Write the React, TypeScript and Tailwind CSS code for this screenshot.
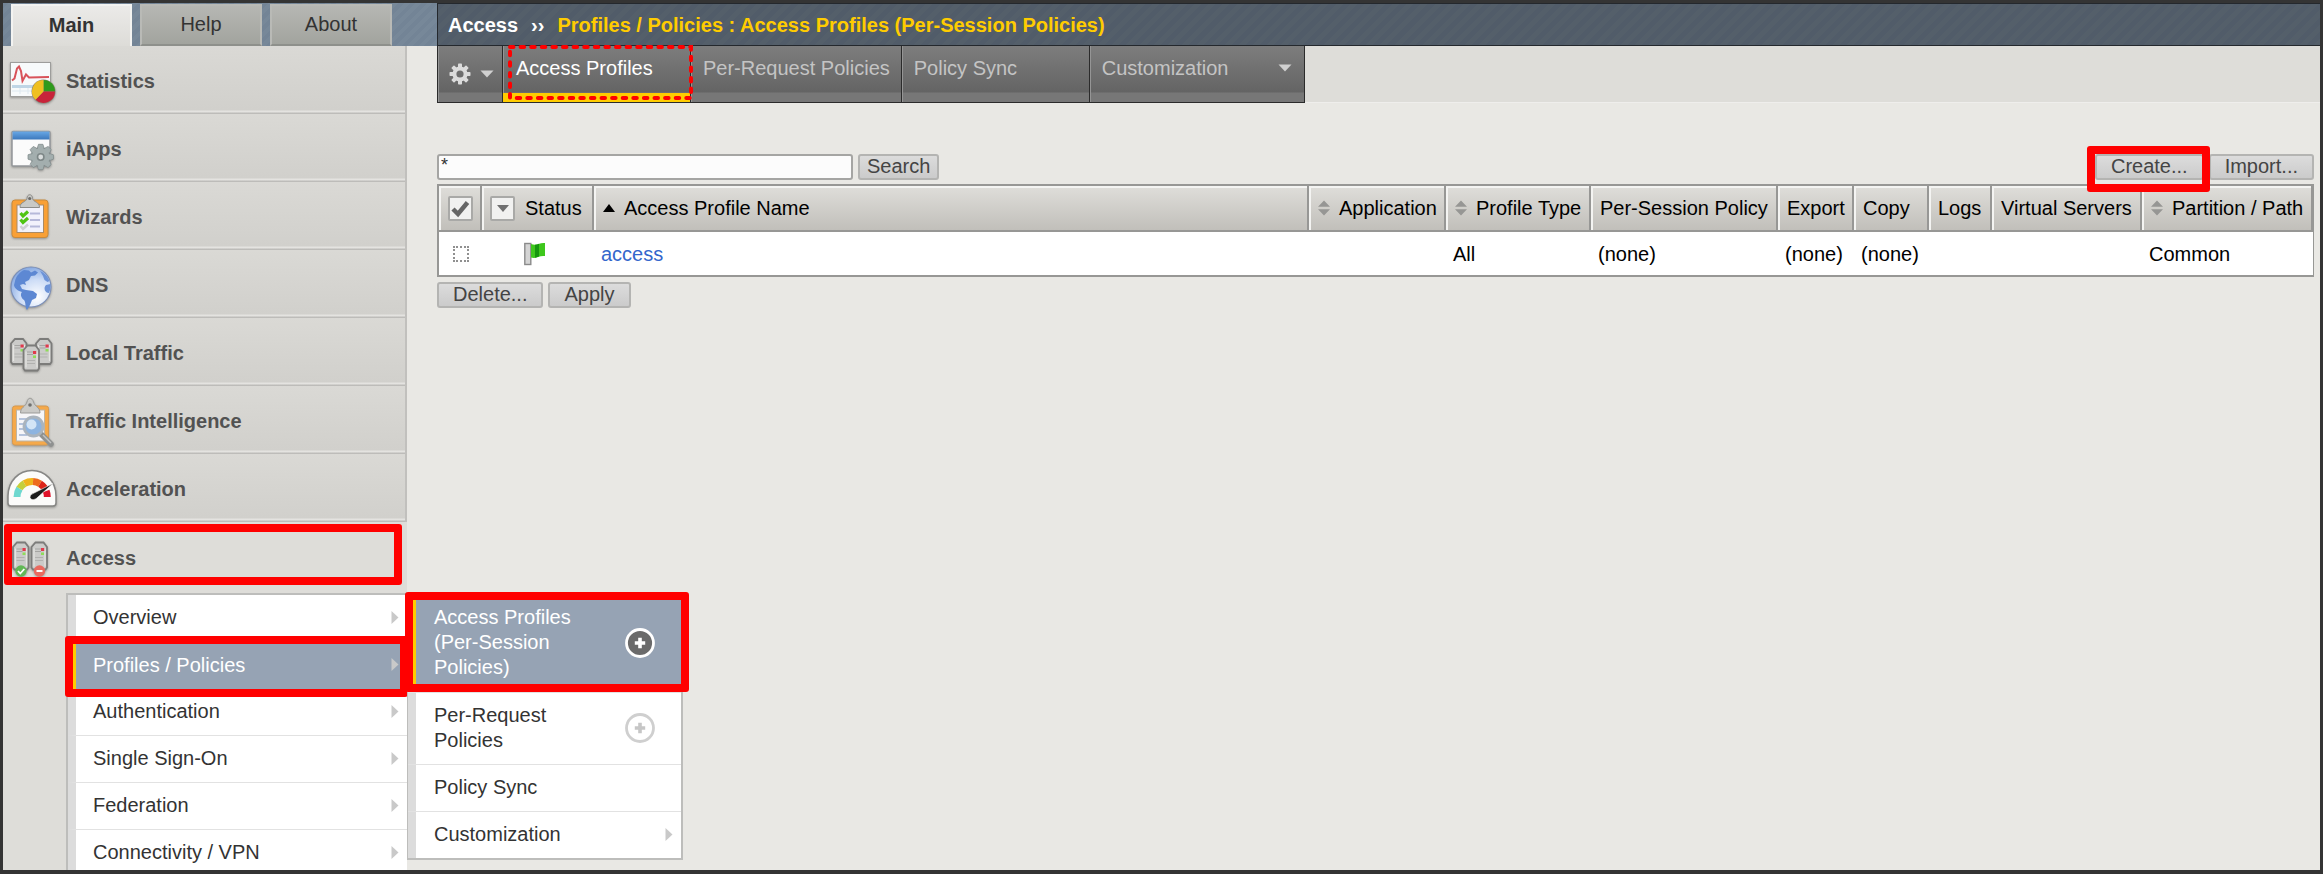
import React from "react";

type IconProps = { children: React.ReactNode };

function MenuIcon({ children }: IconProps) {
  return (
    <svg aria-hidden="true" className="h-[68px] w-[63px] shrink-0 drop-shadow-[0_1px_1px_rgba(0,0,0,0.3)]" viewBox="3 0 63 68">
      {children}
    </svg>
  );
}

const TEETH = [0, 45, 90, 135, 180, 225, 270, 315];

function StatisticsIcon() {
  return (
    <MenuIcon>
      <rect x="10.5" y="15.5" width="40" height="34" fill="#f7fafb" stroke="#9d9d9b" />
      <rect x="12" y="38" width="26" height="3" fill="#bfd6e6" />
      <path d="M12 44h20M20 41v6M28 41v6" stroke="#dde8ef" />
      <path d="M12 33.500L14.500 31.500L17 21.500L19 19.500L21 24L22.500 34L26 27.500L29 30.500L49 30" fill="none" stroke="#d8535a" strokeWidth="2" />
      <circle cx="43.500" cy="44.500" r="12" fill="#8f8878" />
      <path d="M43.500 44.500V33a11.500 11.500 0 0 1 11.500 11.500z" fill="#2f9a1c" />
      <path d="M43.500 44.500H55a11.500 11.500 0 0 1-19.500 8.200z" fill="#c8233a" />
      <path d="M43.500 44.500L35.500 52.700A11.500 11.500 0 0 1 43.500 33z" fill="#efc021" />
    </MenuIcon>
  );
}

function AppsIcon() {
  return (
    <MenuIcon>
      <defs>
        <linearGradient id="appsBar" x1="0" y1="0" x2="0" y2="1">
          <stop offset="0" stopColor="#69a8e6" />
          <stop offset="1" stopColor="#3c78bc" />
        </linearGradient>
      </defs>
      <rect x="12" y="16.500" width="38" height="34.500" rx="1" fill="#fbfbfb" stroke="#94979a" strokeWidth="1.500" />
      <rect x="12.500" y="16.500" width="37" height="8" fill="url(#appsBar)" />
      <g fill="#a3aeae" stroke="#7d8787" strokeWidth="0.700">
        {TEETH.map((a) => (
          <path key={a} d="M37 34L38.500 29.300H42.900L44.400 34z" transform={`rotate(${a} 40.700 42)`} />
        ))}
        <circle cx="40.700" cy="42" r="9.300" />
      </g>
      {TEETH.map((a) => (
        <path key={a} d="M37.500 35L39 30.200H42.400L43.900 35z" fill="#a3aeae" transform={`rotate(${a} 40.700 42)`} />
      ))}
      <circle cx="40.700" cy="42" r="3.200" fill="#d9dddd" stroke="#7d8787" strokeWidth="1.600" />
    </MenuIcon>
  );
}

function WizardsIcon() {
  return (
    <MenuIcon>
      <rect x="12" y="17" width="36" height="37.500" rx="3" fill="#f9a036" stroke="#c98a3b" />
      <rect x="17" y="22" width="26.500" height="27.500" fill="#f2f2fc" stroke="#a98a66" />
      <path d="M20 24.500c0-6 6-5 7-9 0-5 5.500-5 5.500 0 1 4 7 3 7 9z" fill="#c9c9c6" stroke="#8d8d8a" />
      <circle cx="29.700" cy="15.500" r="1.600" fill="#6a6a68" />
      <path d="M20.500 30l2.500 3 5-4.500M20.500 36.500l2.500 3 5-4.500" fill="none" stroke="#4fc414" strokeWidth="3.200" />
      <path d="M20.500 43l2.500 3 5-4.500" fill="none" stroke="#cfcfd4" strokeWidth="2.500" />
      <path d="M30 30.500h10M30 37h10M30 43.500h10" stroke="#b6b9da" strokeWidth="2.200" />
    </MenuIcon>
  );
}

function DnsIcon() {
  return (
    <MenuIcon>
      <defs>
        <radialGradient id="dnsGlobe" cx="0.65" cy="0.75" r="0.8">
          <stop offset="0" stopColor="#ffffff" />
          <stop offset="0.550" stopColor="#ccdcf6" />
          <stop offset="1" stopColor="#7fa4e0" />
        </radialGradient>
      </defs>
      <circle cx="31" cy="36" r="20" fill="url(#dnsGlobe)" stroke="#7b8fb8" strokeWidth="1.200" />
      <path
        d="M15 30c1-5 5-9 9-11l5 .5 2 2 4-2 3 2-3 3-4 .5-2 4-4 2 1 3-3-1-3 1 2 4 4 1 7 1 4 3-1 4-4 2-2 5-3 5c-2-2-1-8-3-10-3-2-4-6-2-8-4-1-8-4-8-7z"
        fill="#5d88d3"
      />
      <path d="M40 20c5 2 8 6 9.500 10l-2 1-3-2-1.500-4zM46 34l4.500-1c.3 4-.5 7-1.500 9-4 0-6-5-3-8z" fill="#6c93d8" />
    </MenuIcon>
  );
}

function Server({ x, y, h }: { x: number; y: number; h: number }) {
  return (
    <g transform={`translate(${x} ${y})`}>
      <path d={`M1 5.500L5 1H13L16.500 5.500V${h - 2}L15 ${h}H2.500L1 ${h - 2}z`} fill="#cbcbc9" stroke="#7c7c7a" strokeWidth="1.800" />
      <path d={`M3.500 7V${h - 3}M14.500 7V${h - 3}`} stroke="#e4e4e2" strokeWidth="1.200" />
      <path d="M4.500 7.500h6M4.500 10h6" stroke="#a5a5a3" strokeWidth="1.200" />
      <path d="M4.500 16h8M4.500 19h8" stroke="#b1b1af" strokeWidth="1" />
      <rect x="10.500" y="6.500" width="3.200" height="3" fill="#e03a4c" />
      <rect x="10.500" y="11" width="3" height="2.500" fill="#8fdc5a" />
    </g>
  );
}

function LocalTrafficIcon() {
  return (
    <MenuIcon>
      <Server x={10} y={19} h={26} />
      <Server x={35} y={19} h={26} />
      <Server x={22.5} y={25.5} h={26} />
    </MenuIcon>
  );
}

function IntelligenceIcon() {
  return (
    <MenuIcon>
      <rect x="12.500" y="19" width="36" height="39" rx="2.500" fill="#f5a94a" stroke="#d69a50" />
      <rect x="16.500" y="23" width="28" height="31" fill="#f6f6f8" stroke="#bdb4a4" />
      <path d="M19 32h9M19 37h5M19 42h5M19 48h8" stroke="#b4c3dc" strokeWidth="1.800" />
      <path d="M20.500 26c0-6 5-6 6.500-11 1-5 5-5 6.500 0 1.500 5 6.500 5 6.500 11z" fill="#cacac7" stroke="#9b9b98" />
      <circle cx="30" cy="18" r="1.800" fill="#70706e" />
      <path d="M41 47l10 10" stroke="#8f9190" strokeWidth="5.500" strokeLinecap="round" />
      <path d="M43 48l8 8" stroke="#c1c3c2" strokeWidth="1.500" />
      <circle cx="33.500" cy="39.500" r="9.500" fill="#8db4e0" stroke="#aab4bd" strokeWidth="2.800" />
      <circle cx="31.500" cy="37.500" r="5" fill="#d3e5f6" />
    </MenuIcon>
  );
}

function AccelerationIcon() {
  return (
    <MenuIcon>
      <path d="M8 48V41C8 26 19 15.500 32 15.500S56 26 56 41V48Q56 51 53 51H11Q8 51 8 48z" fill="#fbfbfa" stroke="#868684" strokeWidth="1.500" />
      <g fill="none" strokeWidth="7">
        <path d="M17 42A15.500 15.500 0 0 1 19.500 33.500" stroke="#6ed8cf" />
        <path d="M19.500 33.500A15.500 15.500 0 0 1 24.500 28.500" stroke="#c5cf3c" />
        <path d="M24.500 28.500A15.500 15.500 0 0 1 33 26.500" stroke="#eeb41c" />
        <path d="M33 26.500A15.500 15.500 0 0 1 40 28.700" stroke="#ed6a1c" />
        <path d="M40 28.700A15.500 15.500 0 0 1 45 33.500" stroke="#dc2418" />
        <path d="M46.200 36A15.500 15.500 0 0 1 47.300 42" stroke="#e0122a" />
      </g>
      <path d="M53 28.500L36 43.800Q31 46 30 42.500Q29.500 39.500 34 38z" fill="#1c1c1c" stroke="#f6f6f5" strokeWidth="0.600" />
    </MenuIcon>
  );
}

function AccessIcon() {
  return (
    <MenuIcon>
      <Server x={12} y={17.5} h={28} />
      <Server x={30.5} y={17.5} h={28} />
      <circle cx="21" cy="47" r="5.700" fill="#62b855" />
      <path d="M18 47l2.300 2.500 4-4.500" fill="none" stroke="#ffffff" strokeWidth="1.800" />
      <circle cx="39.500" cy="47" r="5.700" fill="#ea6a60" />
      <path d="M36.500 47h6" stroke="#ffffff" strokeWidth="2" />
    </MenuIcon>
  );
}

function Gear() {
  return (
    <svg aria-hidden="true" className="size-[22px]" viewBox="0 0 22 22">
      {TEETH.map((a) => (
        <rect key={a} x="9" y="0.500" width="4" height="6" rx="0.800" fill="#dcdcdc" transform={`rotate(${a} 11 11)`} />
      ))}
      <circle cx="11" cy="11" r="5.600" fill="none" stroke="#dcdcdc" strokeWidth="4" />
    </svg>
  );
}

function ArrowRight() {
  return (
    <svg aria-hidden="true" className="h-[13px] w-[8px] shrink-0" viewBox="0 0 8 13">
      <path d="M0.500 0L7.500 6.500L0.500 13z" fill="#c9c9c9" />
    </svg>
  );
}

function ArrowDown() {
  return (
    <svg aria-hidden="true" className="h-[8px] w-[14px] shrink-0" viewBox="0 0 14 8">
      <path d="M0.500 0.500H13.500L7 7.500z" fill="#d0d0d0" />
    </svg>
  );
}

function PlusCircle({ active }: { active?: boolean }) {
  return (
    <svg aria-hidden="true" className="size-[32px] shrink-0" viewBox="0 0 32 32">
      <circle cx="16" cy="16" r="13.500" fill={active ? "#6a6a6a" : "#ffffff"} stroke={active ? "#ffffff" : "#cfcfcf"} strokeWidth="2.800" />
      <path d="M16 10.800v10.400M10.800 16h10.400" stroke={active ? "#ffffff" : "#c6c6c6"} strokeWidth="3.600" />
    </svg>
  );
}

function SortArrows() {
  return (
    <svg aria-hidden="true" className="h-[16px] w-[12px] shrink-0" viewBox="0 0 12 16">
      <path d="M6 0.500L12 6.800H0zM0 9.200H12L6 15.500z" fill="#969694" />
    </svg>
  );
}

function Highlight({ place }: { place: string }) {
  return <span aria-hidden="true" className={`pointer-events-none absolute rounded-[3px] border-8 border-[#ff0000] ${place}`} />;
}

const sections = [
  { name: "Statistics", Icon: StatisticsIcon },
  { name: "iApps", Icon: AppsIcon },
  { name: "Wizards", Icon: WizardsIcon },
  { name: "DNS", Icon: DnsIcon },
  { name: "Local Traffic", Icon: LocalTrafficIcon },
  { name: "Traffic Intelligence", Icon: IntelligenceIcon },
  { name: "Acceleration", Icon: AccelerationIcon },
];

const accessLinks = ["Overview", "Profiles / Policies", "Authentication", "Single Sign-On", "Federation", "Connectivity / VPN"];

const profileLinks = [
  { name: "Access Profiles (Per-Session Policies)", plus: true },
  { name: "Per-Request Policies", plus: true },
  { name: "Policy Sync" },
  { name: "Customization", more: true },
];

const columns = [
  { name: "Application", width: "w-[137px]", sortable: true },
  { name: "Profile Type", width: "w-[145px]", sortable: true },
  { name: "Per-Session Policy", width: "w-[187px]" },
  { name: "Export", width: "w-[76px]" },
  { name: "Copy", width: "w-[75px]" },
  { name: "Logs", width: "w-[63px]" },
  { name: "Virtual Servers", width: "w-[150px]" },
  { name: "Partition / Path", width: "w-[171px]", sortable: true },
];

const values = ["", "All", "(none)", "(none)", "(none)", "", "", "Common"];

const buttonStyle =
  "h-[26px] rounded-[3px] border-2 border-[#b4b4b2] bg-linear-to-b from-[#dcdcdc] to-[#cbcbcb] pb-[2px] leading-[20px] text-[#444444] whitespace-nowrap";
const headStyle =
  "h-[46px] border-r-2 border-b-2 border-[#979795] bg-linear-to-b from-[#dfdeda] to-[#c1bfba] text-left font-normal whitespace-nowrap shadow-[inset_2px_2px_0_#f4f4f2]";
const tabStyle =
  "relative flex h-[57px] items-center border-r border-b border-[#2b2b2b] bg-[linear-gradient(#7d7d7d,#646464_46px,#777777_47px)] pb-[12px] whitespace-nowrap shadow-[inset_1px_0_0_#959595]";

function Header() {
  return (
    <header className="flex h-[43px] shrink-0">
      <nav
        aria-label="Sections"
        className="flex w-[434px] shrink-0 gap-[8px] bg-[repeating-linear-gradient(135deg,#738496_0_4px,#778899_4px_8px)] pt-[1px] pl-[8px]"
      >
        <button className="w-[121px] border-x-2 border-t-2 border-[#f3f3f1] bg-linear-to-b from-[#ebeae8] to-[#dddcd8] pb-[2px] font-bold text-[#333333]">Main</button>
        <button className="w-[122px] border-2 border-[#b9bab6] border-b-[#8e908b] bg-linear-to-b from-[#b6b7b3] to-[#a2a49e] pb-[2px] text-[#333333]">Help</button>
        <button className="w-[122px] border-2 border-[#b9bab6] border-b-[#8e908b] bg-linear-to-b from-[#b6b7b3] to-[#a2a49e] pb-[2px] text-[#333333]">About</button>
      </nav>
      <h1 className="flex flex-1 items-center gap-[13px] border border-r-0 border-[#24282d] bg-[repeating-linear-gradient(135deg,#515c69_0_5px,#545f6a_5px_10px)] pl-[10px] font-bold whitespace-nowrap text-white">
        <span>Access</span>
        <span>››</span>
        <span className="text-[#ffcc00]">Profiles / Policies : Access Profiles (Per-Session Policies)</span>
      </h1>
    </header>
  );
}

function Flyout() {
  return (
    <div className="absolute top-0 left-full z-10 w-[276px]">
      <ul className="border-2 border-l border-[#bdbdbb] bg-white">
        {profileLinks.map((link, i) => (
          <li key={link.name} className={i === 0 ? "" : "border-t border-[#e2e2e2]"}>
            <a
              href="#"
              className={`flex items-center justify-between border-l-8 pt-[10px] pl-[18px] leading-[25px] ${
                i === 0 ? "border-[#ffcc00] bg-[#96a3b4] pb-[12px] text-white" : "border-[#dcdcdc] pb-[11px] text-[#333333]"
              } ${link.more ? "pr-[8px]" : "pr-[25px]"}`}
            >
              <span className="max-w-[170px]">{link.name}</span>
              {link.plus && <PlusCircle active={i === 0} />}
              {link.more && <ArrowRight />}
            </a>
          </li>
        ))}
      </ul>
      <Highlight place="-top-[1px] -left-[2px] h-[100px] -right-[6px]" />
    </div>
  );
}

function Sidebar() {
  return (
    <aside className="relative z-10 w-[404px] shrink-0 bg-[#deddd9]">
      <ul>
        {sections.map(({ name, Icon }) => (
          <li key={name} className="h-[68px] border-r-2 border-[#c1c0bd]">
            <a
              href="#"
              className="flex h-full items-center bg-[linear-gradient(#dad9d5,#d1d0cc_64px,#e4e3e0_65px,#e4e3e0_66px,#bdbcb9_67px)] pt-px font-bold text-[#525252]"
            >
              <Icon />
              {name}
            </a>
          </li>
        ))}
        <li>
          <a href="#" className="relative flex h-[71px] items-center font-bold text-[#525252]">
            <AccessIcon />
            Access
            <Highlight place="top-[2px] left-[1px] right-[5px] h-[61px]" />
          </a>
          <div className="relative ml-[63px]">
            <ul className="border-t-2 border-l-2 border-[#bdbdbb] bg-white">
              {accessLinks.map((name, i) => (
                <li key={name} className="relative">
                  <a
                    href="#"
                    className={`flex h-[47px] items-center justify-between border-l-8 pr-[8px] pb-[2px] pl-[17px] whitespace-nowrap ${
                      i === 1 ? "border-l-[#ffcc00] bg-[#96a3b4] text-white" : "border-b border-b-[#e2e2e2] border-l-[#dcdcdc] text-[#333333]"
                    }`}
                  >
                    {name}
                    <ArrowRight />
                  </a>
                  {i === 1 && <Highlight place="-top-[6px] -left-[3px] -right-[1px] z-10 h-[61px]" />}
                </li>
              ))}
            </ul>
            <Flyout />
          </div>
        </li>
      </ul>
    </aside>
  );
}

function ProfileTabs() {
  return (
    <div className="flex">
      <nav aria-label="Access" className="flex shrink-0 border-l border-[#2b2b2b] text-[#c4c4c4]">
        <button aria-label="Options" className={`${tabStyle} w-[65px] gap-[9px] pt-[12px] pl-[11px]`}>
          <Gear />
          <ArrowDown />
        </button>
        <a href="#" className={`${tabStyle} w-[188px] pl-[13px] text-white`}>
          Access Profiles
          <span className="absolute inset-x-0 bottom-0 h-[9px] bg-[#ffcc00]" />
          <svg aria-hidden="true" className="absolute top-[-1px] left-[5px] z-10 h-[55px] w-[185px]" viewBox="0 0 185 55">
            <rect x="2" y="2" width="181" height="51" fill="none" stroke="#ff0000" strokeWidth="4" strokeDasharray="3.500 7.100" strokeLinecap="round" />
          </svg>
        </a>
        <a href="#" className={`${tabStyle} pr-[11px] pl-[12px]`}>Per-Request Policies</a>
        <a href="#" className={`${tabStyle} w-[188px] pl-[12px]`}>Policy Sync</a>
        <a href="#" className={`${tabStyle} w-[215px] justify-between pr-[12px] pl-[12px]`}>
          Customization
          <ArrowDown />
        </a>
      </nav>
      <div className="flex-1 border-b border-[#efeeec] bg-[#deddd9]" />
    </div>
  );
}

function ProfileTable() {
  return (
    <table className="mt-[4px] w-full table-fixed border-separate border-spacing-0 border-t-2 border-r border-b-2 border-l-2 border-[#979795] bg-white text-black">
      <thead>
        <tr>
          <th className={`${headStyle} w-[43px] pl-[9px]`}>
            <button aria-label="Select all" className="block size-[25px] rounded-[2px] border-2 border-[#a9a9a7] bg-[#f1f1f0]">
              <svg aria-hidden="true" className="size-[21px]" viewBox="0 0 21 21">
                <path d="M3 11L8 16L17.500 4.500" fill="none" stroke="#666666" strokeWidth="4.500" />
              </svg>
            </button>
          </th>
          <th className={`${headStyle} w-[112px] pl-[8px]`}>
            <span className="flex items-center gap-[10px]">
              <button aria-label="Filter by status" className="flex size-[25px] items-center justify-center rounded-[2px] border-2 border-[#a9a9a7] bg-[#f1f1f0]">
                <svg aria-hidden="true" className="h-[7px] w-[12px]" viewBox="0 0 12 7">
                  <path d="M0 0H12L6 7z" fill="#707070" />
                </svg>
              </button>
              Status
            </span>
          </th>
          <th className={`${headStyle} pl-[9px]`}>
            <span className="flex items-center gap-[9px]">
              <svg aria-hidden="true" className="h-[8px] w-[12px]" viewBox="0 0 12 8">
                <path d="M6 0L12 8H0z" fill="#000000" />
              </svg>
              Access Profile Name
            </span>
          </th>
          {columns.map((c, i) => (
            <th key={c.name} className={`${headStyle} ${c.width} pl-[9px] ${i === columns.length - 1 ? "border-r-0" : ""}`}>
              <span className="flex items-center gap-[9px]">
                {c.sortable && <SortArrows />}
                {c.name}
              </span>
            </th>
          ))}
        </tr>
      </thead>
      <tbody>
        <tr>
          <td className="h-[43px]">
            <input type="checkbox" aria-label="Select access" className="mx-auto block size-[16px] appearance-none border-2 border-dotted border-[#909090]" />
          </td>
          <td className="pl-[42px]">
            <svg role="img" aria-label="Enabled" className="block h-[24px] w-[22px]" viewBox="0 0 22 24">
              <rect x="0.800" y="1.500" width="6" height="21" fill="#d4d4d4" stroke="#8a8a8a" strokeWidth="1.400" />
              <path d="M7 2q4 1.500 7.500 0t6.500-1V14q-3.500-.5-7 1t-7 .5z" fill="#3ec71c" />
              <path d="M11 2.800q2.500 0 4-1V14.600l-4 1.200z" fill="#16960e" />
            </svg>
          </td>
          <td className="pl-[7px]">
            <a href="#" className="text-[#3366cc]">access</a>
          </td>
          {values.map((v, i) => (
            <td key={columns[i].name} className="pl-[7px] whitespace-nowrap">{v}</td>
          ))}
        </tr>
      </tbody>
    </table>
  );
}

export default function App() {
  return (
    <div className="flex h-screen flex-col overflow-hidden border-[3px] border-b-4 border-[#343434] bg-[#e9e8e4] font-['Liberation_Sans',Arial,sans-serif] text-[20px] leading-[24px]">
      <Header />
      <div className="flex min-h-0 flex-1">
        <Sidebar />
        <main className="min-w-0 flex-1 pl-[30px]">
          <ProfileTabs />
          <div className="pt-[51px] pr-[6px]">
            <div className="flex items-center justify-between">
              <form className="flex gap-[5px]" onSubmit={(e) => e.preventDefault()}>
                <input
                  aria-label="Search profiles"
                  defaultValue="*"
                  className="h-[26px] w-[416px] rounded-[3px] border-2 border-[#a5a5a3] bg-[#fcfcfc] px-[2px] pb-[3px] text-[18px] leading-[20px] text-[#333333]"
                />
                <button className={`${buttonStyle} px-[7px]`}>Search</button>
              </form>
              <div className="flex gap-[5px]">
                <div className="relative flex">
                  <button className={`${buttonStyle} px-[14px]`}>Create...</button>
                  <Highlight place="-top-[8px] -left-[8px] -right-[6px] z-10 h-[46px]" />
                </div>
                <button className={`${buttonStyle} px-[14px]`}>Import...</button>
              </div>
            </div>
            <ProfileTable />
            <div className="mt-[5px] flex gap-[5px]">
              <button className={`${buttonStyle} px-[14px]`}>Delete...</button>
              <button className={`${buttonStyle} px-[14px]`}>Apply</button>
            </div>
          </div>
        </main>
      </div>
    </div>
  );
}
